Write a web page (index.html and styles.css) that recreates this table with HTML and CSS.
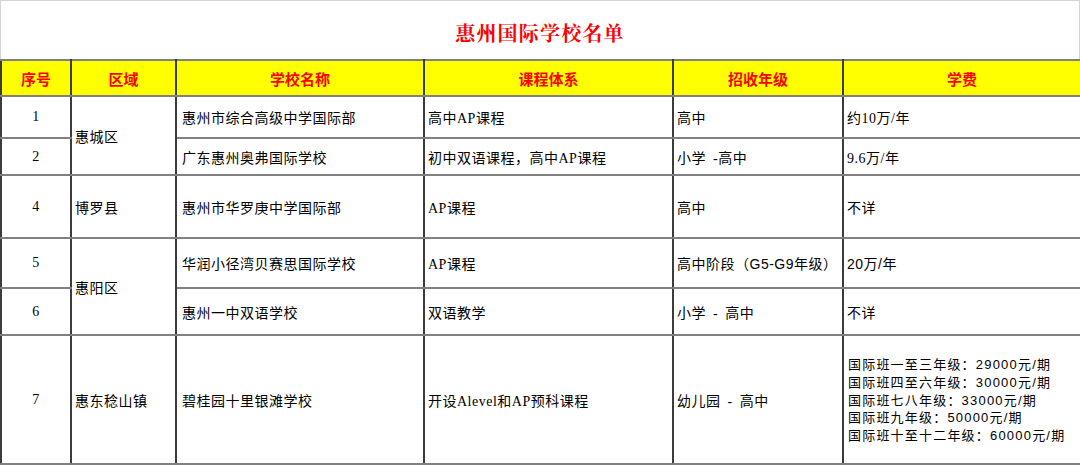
FILE: index.html
```html
<!DOCTYPE html>
<html lang="zh">
<head>
<meta charset="utf-8">
<title>惠州国际学校名单</title>
<link rel="stylesheet" href="styles.css">
</head>
<body>
<div class="sheet">
  <div class="title">惠州国际学校名单</div>
  <table class="list">
    <colgroup>
      <col class="c-no">
      <col class="c-area">
      <col class="c-name">
      <col class="c-course">
      <col class="c-grade">
      <col class="c-fee">
    </colgroup>
    <thead>
      <tr class="head">
        <th>序号</th>
        <th>区域</th>
        <th>学校名称</th>
        <th>课程体系</th>
        <th>招收年级</th>
        <th>学费</th>
      </tr>
    </thead>
    <tbody>
      <tr class="r1">
        <td class="no">1</td>
        <td rowspan="2">惠城区</td>
        <td class="name">惠州市综合高级中学国际部</td>
        <td>高中AP课程</td>
        <td>高中</td>
        <td>约10万/年</td>
      </tr>
      <tr class="r2">
        <td class="no">2</td>
        <td class="name">广东惠州奥弗国际学校</td>
        <td>初中双语课程，高中AP课程</td>
        <td>小学 -高中</td>
        <td>9.6万/年</td>
      </tr>
      <tr class="r4">
        <td class="no">4</td>
        <td>博罗县</td>
        <td class="name">惠州市华罗庚中学国际部</td>
        <td>AP课程</td>
        <td>高中</td>
        <td>不详</td>
      </tr>
      <tr class="r5">
        <td class="no">5</td>
        <td rowspan="2">惠阳区</td>
        <td class="name">华润小径湾贝赛思国际学校</td>
        <td>AP课程</td>
        <td class="sans">高中阶段（G5-G9年级）</td>
        <td class="sans">20万/年</td>
      </tr>
      <tr class="r6">
        <td class="no">6</td>
        <td class="name">惠州一中双语学校</td>
        <td>双语教学</td>
        <td>小学 - 高中</td>
        <td>不详</td>
      </tr>
      <tr class="r7">
        <td class="no">7</td>
        <td>惠东稔山镇</td>
        <td class="name">碧桂园十里银滩学校</td>
        <td>开设Alevel和AP预科课程</td>
        <td>幼儿园 - 高中</td>
        <td class="fees">
          <div>国际班一至三年级：29000元/期</div>
          <div>国际班四至六年级：30000元/期</div>
          <div>国际班七八年级：33000元/期</div>
          <div>国际班九年级：50000元/期</div>
          <div>国际班十至十二年级：60000元/期</div>
        </td>
      </tr>
    </tbody>
  </table>
</div>
</body>
</html>
```
FILE: styles.css
```css
html, body {
  margin: 0;
  padding: 0;
  background: #ffffff;
}

.sheet {
  width: 1080px;
  height: 465px;
  overflow: hidden;
}

.title {
  box-sizing: border-box;
  height: 59px;
  border: 1px solid #d4d4d4;
  border-bottom: none;
  display: flex;
  align-items: center;
  justify-content: center;
  padding-top: 4px;
  color: #ff0000;
  font-family: "Noto Serif CJK SC", "Noto Sans CJK SC", serif;
  font-weight: 700;
  font-size: 20px;
  letter-spacing: 1.2px;
}

.list {
  width: 1080px;
  border-collapse: collapse;
  table-layout: fixed;
  font-family: "Liberation Serif", "Noto Sans CJK SC", serif;
  font-size: 14px;
  letter-spacing: 0.5px;
  word-spacing: 3px;
  color: #000000;
  border: 1px solid #000000;
}

.c-no { width: 70px; }
.c-area { width: 105px; }
.c-name { width: 248px; }
.c-course { width: 249px; }
.c-grade { width: 170px; }
.c-fee { width: 238px; }

.list th,
.list td {
  padding: 0 0 0 3px;
  border-top: 2px solid #808080;
  border-bottom: 2px solid #808080;
  border-left: 2px solid #3c3c3c;
  border-right: 2px solid #3c3c3c;
  text-align: left;
  vertical-align: middle;
  white-space: nowrap;
  overflow: hidden;
}

.list th {
  background: #ffff00;
  color: #ff0000;
  font-family: "Noto Sans CJK SC", sans-serif;
  font-weight: 700;
  font-size: 15px;
  letter-spacing: 0;
  text-align: center;
  padding: 0;
}

.list td.no {
  text-align: center;
  padding: 0;
}

.list td.name {
  padding-left: 5px;
}

.list td.sans {
  font-family: "Liberation Sans", "Noto Sans CJK SC", sans-serif;
}

.list td.fees {
  padding-left: 4px;
  padding-top: 2px;
  font-family: "Liberation Sans", "Noto Sans CJK SC", sans-serif;
  font-size: 13px;
  letter-spacing: 1.2px;
  line-height: 17.75px;
}

.head { height: 36px; }
.r1 { height: 42px; }
.r2 { height: 37px; }
.r4 { height: 63px; }
.r5 { height: 50px; }
.r6 { height: 47px; }
.r7 { height: 129px; }
```
